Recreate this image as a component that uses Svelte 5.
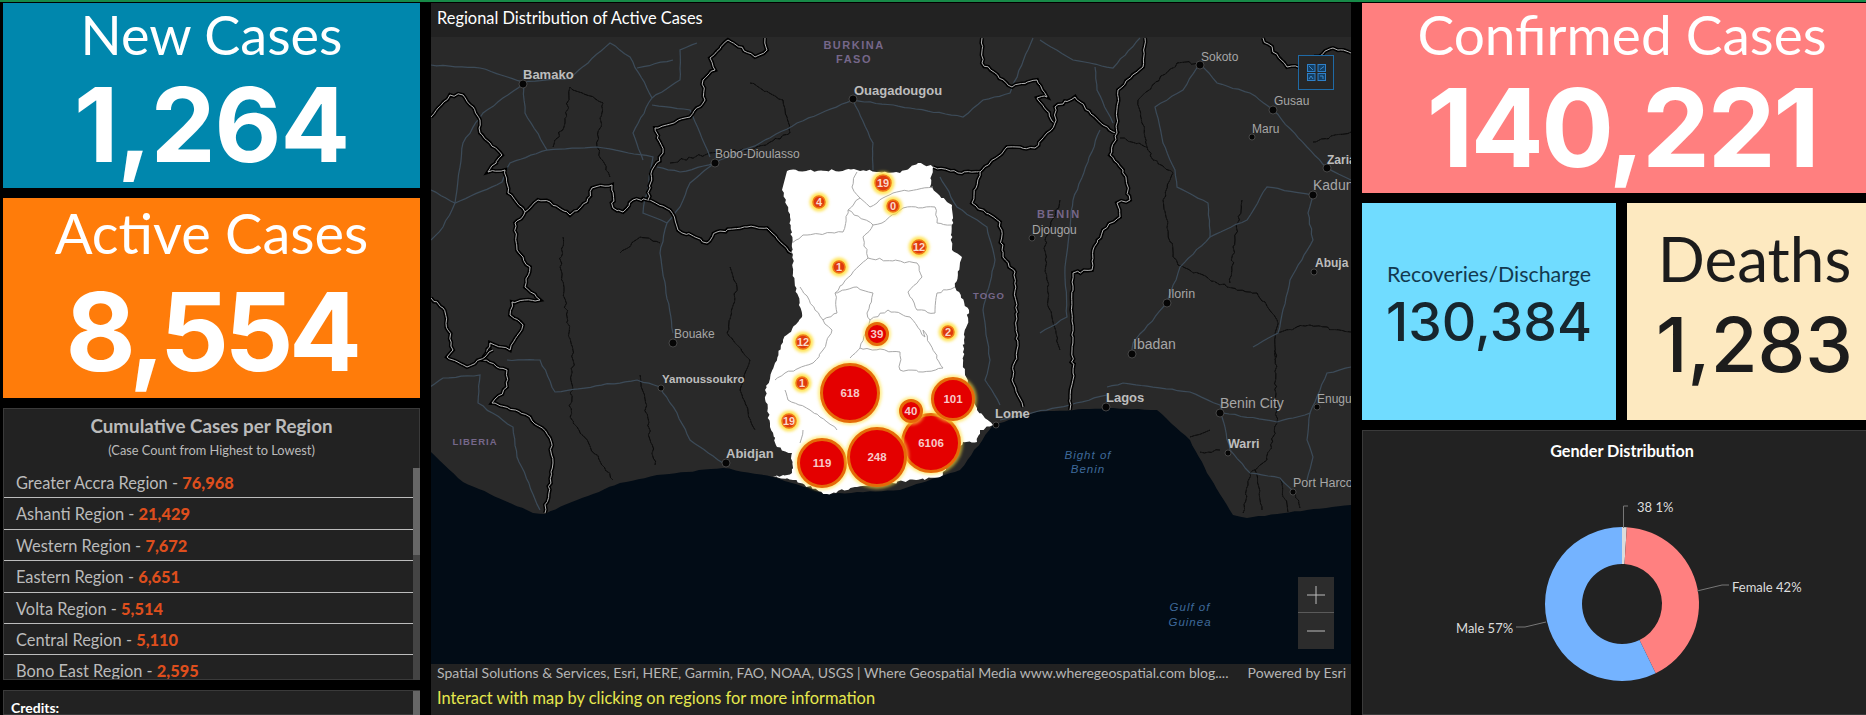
<script>
  // map data is in page pixels, the svg viewBox starts at the map's own corner
  const rivers = [
    "431,65 480,68 523,82 525,113 547,150 597,147 653,157 643,213 667,223 660,253 673,333",
    "523,82 570,78 610,43 630,57 652,98 633,133 643,160",
    "547,150 510,163 502,182 455,203 431,190",
    "455,203 443,227 431,240",
    "523,84 483,113 463,143 458,180 455,203",
    "853,100 797,123 760,143 715,163 680,172 657,167",
    "715,163 690,183 680,207 667,223",
    "652,98 680,80 680,50 697,43",
    "637,68 673,60",
    "652,105 690,110 700,133 710,157",
    "853,100 873,143 873,170",
    "853,100 910,108 963,117 983,100 1010,93 1033,38",
    "1040,40 1073,60 1113,68 1140,38",
    "1095,67 1097,90 1113,123",
    "1200,63 1183,90 1155,107 1163,143 1175,170 1177,187 1208,203 1210,237 1180,267 1167,303 1133,343 1132,353",
    "1200,63 1217,83 1250,93 1273,110 1307,147 1327,168 1351,180",
    "1210,237 1247,220 1267,187 1313,195 1308,213 1313,240 1290,280 1278,333 1253,347",
    "1100,130 1073,200 1065,267 1067,317 1040,333",
    "940,177 957,207 987,227 995,260 983,310 990,360 985,380 1000,405",
    "1107,387 1123,383 1190,392 1220,405 1223,413 1277,422 1310,413 1327,373 1351,367",
    "1222,417 1230,450 1250,473 1280,478 1292,490",
    "1310,413 1307,440 1313,457 1307,480",
    "430,387 443,378 480,375 478,403 513,427 517,457 540,510",
    "507,360 540,360 555,392 637,380 660,387 677,413 690,440 723,463",
    "1000,420 1035,412 1070,405 1107,395"
  ];
  const streams = [
    "570,87 603,103 597,147 610,177",
    "570,87 565,123 553,147",
    "730,267 737,287 727,333 750,360 740,390 755,430",
    "563,237 560,267 573,360 570,417 613,480",
    "660,243 640,237 620,253",
    "750,83 783,100 787,117 790,133 750,150 710,153 670,163",
    "1138,100 1177,63 1200,63",
    "1138,100 1147,147 1120,138",
    "1147,147 1153,160 1173,173 1163,200 1173,257 1178,265 1227,287 1257,293 1277,320 1275,360",
    "1242,200 1235,240 1230,283",
    "1277,333 1310,325 1351,332",
    "1313,142 1351,132",
    "1275,350 1277,423 1267,460 1250,473 1243,513",
    "1255,470 1262,510",
    "1280,478 1288,512",
    "1295,490 1300,508",
    "1190,437 1210,430",
    "1200,452 1220,450",
    "640,375 655,465",
    "1060,200 1045,240 1048,300 1060,350"
  ];
  const borders = [
    "431,117 438,108 450,95 463,95 473,107 480,120 480,133 490,143 502,155 488,172 505,170 508,193 525,212 538,200 550,202 570,215 587,202 592,188 612,185 613,208 623,212 633,200 648,200 670,210 678,230 707,243 717,232 747,227 767,228 792,253",
    "648,200 652,170 663,153 655,128 690,117 705,100 703,80 715,70 710,58 728,40 755,57 767,50 765,38",
    "525,212 515,223 517,250 530,267 525,287 540,300 512,302 510,315 523,325 510,350 490,343 483,360 507,370 507,387 492,403 530,417 550,438 553,463 545,513",
    "431,298 443,308 453,350 447,357 467,367 485,357 493,350",
    "982,38 982,63 1012,87 1037,80 1047,97 1037,98 1055,123 1035,148 1007,147 980,172 958,173 933,167",
    "980,172 972,203 1000,222 1003,257 1015,272 1017,350 1012,380 1023,407",
    "1055,123 1055,107 1075,97 1103,125 1117,133 1110,155 1123,170 1130,200 1117,203 1120,217 1103,230 1093,250 1092,270 1073,273 1072,350 1073,373 1070,410",
    "1117,133 1118,90 1143,67 1145,38",
    "1263,38 1287,67 1298,67 1333,48 1351,53"
  ];
  const ocean = "431,452 463,482 533,513 545,514 577,500 620,483 657,475 723,468 773,477 827,494 900,490 960,470 993,425 1037,412 1107,408 1157,410 1190,440 1207,473 1233,515 1247,518 1307,510 1351,505";
  const ghana = "787,171 857,170 900,173 918,163 933,167 930,187 952,205 952,250 962,257 955,287 969,310 964,340 963,363 965,375 977,410 993,425 980,430 977,442 963,442 940,477 857,487 827,494 793,480 773,477 792,473 792,453 777,447 770,427 765,390 775,363 783,340 802,317 793,273 792,243 790,217 782,190";
  const districts = [
    "857,172 852,187 860,198 848,210 843,232 803,235 792,243",
    "860,198 870,207 893,193 933,187",
    "848,210 873,225 863,237 868,258 917,263 922,277 908,292 917,310 935,313 937,293 955,287",
    "873,225 882,223 903,208 935,207 937,223 952,225",
    "868,258 860,265 835,293 837,313 823,320 800,287",
    "835,293 857,287 873,293 867,313 870,320 888,310 910,317 925,337",
    "870,320 860,348 900,352 900,370 923,372 943,368 923,330 925,337",
    "823,320 832,330 823,350 813,363 785,373 775,380",
    "785,390 788,400 810,410 820,417 837,430",
    "803,430 800,443",
    "860,348 850,358"
  ];

  const cities = [
    { x: 523, y: 84, name: "Bamako", lx: 523, ly: 79, bold: true, size: 13 },
    { x: 853, y: 99, name: "Ouagadougou", lx: 854, ly: 95, bold: true, size: 13 },
    { x: 715, y: 163, name: "Bobo-Dioulasso", lx: 715, ly: 158, size: 12 },
    { x: 673, y: 343, name: "Bouake", lx: 674, ly: 338, size: 12 },
    { x: 661, y: 388, name: "Yamoussoukro", lx: 662, ly: 383, bold: true, size: 11.5, r: 3 },
    { x: 726, y: 463, name: "Abidjan", lx: 726, ly: 458, bold: true, size: 13 },
    { x: 1032, y: 238, name: "Djougou", lx: 1032, ly: 234, size: 12, r: 3 },
    { x: 1200, y: 65, name: "Sokoto", lx: 1201, ly: 61, size: 12 },
    { x: 1273, y: 110, name: "Gusau", lx: 1274, ly: 105, size: 12 },
    { x: 1252, y: 137, name: "Maru", lx: 1252, ly: 133, size: 12, r: 3 },
    { x: 1327, y: 168, name: "Zaria", lx: 1327, ly: 164, bold: true, size: 12 },
    { x: 1313, y: 195, name: "Kaduna", lx: 1313, ly: 190, size: 14 },
    { x: 1314, y: 272, name: "Abuja", lx: 1315, ly: 267, bold: true, size: 12, r: 3 },
    { x: 1167, y: 303, name: "Ilorin", lx: 1168, ly: 298, size: 12.5 },
    { x: 1132, y: 354, name: "Ibadan", lx: 1133, ly: 349, size: 14 },
    { x: 1106, y: 407, name: "Lagos", lx: 1106, ly: 402, bold: true, size: 13 },
    { x: 996, y: 425, name: "Lome", lx: 995, ly: 418, bold: true, size: 13, r: 3 },
    { x: 1220, y: 413, name: "Benin City", lx: 1220, ly: 408, size: 14 },
    { x: 1317, y: 407, name: "Enugu", lx: 1317, ly: 403, size: 12, r: 3 },
    { x: 1228, y: 453, name: "Warri", lx: 1228, ly: 448, bold: true, size: 12.5, r: 3 },
    { x: 1293, y: 492, name: "Port Harcourt", lx: 1293, ly: 487, size: 12.5, r: 3 }
  ];
  const countries = [
    { x: 854, y: 49, name: "BURKINA", size: 11, sp: 1.5 },
    { x: 854, y: 63, name: "FASO", size: 11, sp: 1.5 },
    { x: 1059, y: 218, name: "BENIN", size: 11, sp: 2 },
    { x: 989, y: 299, name: "TOGO", size: 9.5, sp: 1 },
    { x: 475, y: 445, name: "LIBERIA", size: 9.5, sp: 1 }
  ];
  const seas = [
    { x: 1088, y: 459, name: "Bight of" },
    { x: 1088, y: 473, name: "Benin" },
    { x: 1190, y: 611, name: "Gulf of" },
    { x: 1190, y: 626, name: "Guinea" }
  ];
  const clusters = [
    { x: 819, y: 202, r: 6, n: 4 },
    { x: 883, y: 183, r: 8, n: 19 },
    { x: 893, y: 206, r: 6, n: 0 },
    { x: 919, y: 247, r: 7, n: 12 },
    { x: 839, y: 267, r: 6, n: 1 },
    { x: 877, y: 334, r: 12, n: 39 },
    { x: 948, y: 332, r: 6, n: 2 },
    { x: 803, y: 342, r: 7, n: 12 },
    { x: 802, y: 383, r: 6, n: 1 },
    { x: 789, y: 421, r: 7, n: 19 },
    { x: 850, y: 393, r: 30, n: 618 },
    { x: 931, y: 443, r: 30, n: 6106 },
    { x: 911, y: 411, r: 12, n: 40 },
    { x: 953, y: 399, r: 22, n: 101 },
    { x: 822, y: 463, r: 25, n: 119 },
    { x: 877, y: 457, r: 30, n: 248 }
  ];
  const regions = [
    ["Greater Accra Region", "76,968"],
    ["Ashanti Region", "21,429"],
    ["Western Region", "7,672"],
    ["Eastern Region", "6,651"],
    ["Volta Region", "5,514"],
    ["Central Region", "5,110"],
    ["Bono East Region", "2,595"]
  ];

  // small seeded random so the borders come out the same on every run
  let seed = 7;
  function rnd() {
    seed = (seed * 16807) % 2147483647;
    return seed / 2147483647 - 0.5;
  }

  function rough(line, amp = 1.2, step = 6, close = false) {
    const pts = line.split(" ").map((p) => p.split(",").map(Number));
    let d = `M${pts[0][0]} ${pts[0][1]}`;
    for (let i = 1; i < pts.length; i++) {
      const [ax, ay] = pts[i - 1];
      const [bx, by] = pts[i];
      const steps = Math.max(1, Math.round(Math.hypot(bx - ax, by - ay) / step));
      for (let s = 1; s <= steps; s++) {
        const t = s / steps;
        const j = s === steps ? 0 : amp;
        d += `L${(ax + (bx - ax) * t + rnd() * j).toFixed(1)} ${(ay + (by - ay) * t + rnd() * j).toFixed(1)}`;
      }
    }
    return close ? d + "Z" : d;
  }

  function arc(from, to, R = 77, r = 40) {
    const a = (from / 100) * 2 * Math.PI;
    const b = (to / 100) * 2 * Math.PI;
    const p = (rad, ang) => `${(rad * Math.sin(ang)).toFixed(2)} ${(-rad * Math.cos(ang)).toFixed(2)}`;
    const large = to - from > 50 ? 1 : 0;
    return `M${p(R, a)}A${R} ${R} 0 ${large} 1 ${p(R, b)}L${p(r, b)}A${r} ${r} 0 ${large} 0 ${p(r, a)}Z`;
  }

  const riverPaths = rivers.map((l) => rough(l, 1.2));
  const streamPaths = streams.map((l) => rough(l, 3, 4));
  const borderPaths = borders.map((l) => rough(l, 2.6, 4));
  const districtPaths = districts.map((l) => rough(l, 2.2, 4));
  const oceanPath = rough(ocean, 1) + "L1351 664L431 664Z";
  const ghanaPath = rough(ghana, 2.6, 3, true);
</script>

<div class="page">
  <div class="col">
    <section class="card blue">
      <div class="label new-label">New Cases</div>
      <div class="num new-num">1,264</div>
    </section>
    <section class="card orange">
      <div class="label active-label">Active Cases</div>
      <div class="num active-num">8,554</div>
    </section>
    <section class="panel list">
      <h3>Cumulative Cases per Region</h3>
      <p class="sub">(Case Count from Highest to Lowest)</p>
      <div class="rows">
        {#each regions as [name, count]}
          <div class="row">{name} - <b>{count}</b></div>
        {/each}
      </div>
      <div class="scroll"><div class="thumb"></div></div>
    </section>
    <section class="panel credits">
      <u>Credits:</u>
      <div class="scroll top"><div class="thumb full"></div></div>
    </section>
  </div>

  <div class="center">
    <header class="map-title">Regional Distribution of Active Cases</header>
    <div class="map">
      <svg viewBox="431 37 920 627" width="920" height="627">
        <defs>
          <filter id="glow" x="-60%" y="-60%" width="220%" height="220%">
            <feGaussianBlur stdDeviation="1.6" />
          </filter>
          <filter id="soft" x="-5%" y="-5%" width="110%" height="110%">
            <feGaussianBlur stdDeviation="0.3" />
          </filter>
        </defs>
        <rect x="431" y="37" width="920" height="627" fill="#292929" />
        <path d={oceanPath} fill="#020c16" />
        <g fill="none" filter="url(#soft)">
          {#each streamPaths as d}
            <path {d} stroke="#0a0a0a" stroke-width="0.9" />
          {/each}
          {#each riverPaths as d}
            <path {d} stroke="#3c4b59" stroke-width="1.2" />
          {/each}
          {#each borderPaths as d}
            <path {d} stroke="#020202" stroke-width="4" />
            <path {d} stroke="#b5b5b5" stroke-width="1" />
          {/each}
        </g>
        <path d={ghanaPath} fill="#fff" filter="url(#soft)" />
        <g fill="none" stroke="#a9a9a9" stroke-width="1">
          {#each districtPaths as d}
            <path {d} />
          {/each}
        </g>
        {#each cities as c}
          <circle cx={c.x} cy={c.y} r={c.r ?? 4} fill="#050505" stroke="#5c5c5c" stroke-width="0.7" />
          <text x={c.lx} y={c.ly} class="city" class:strong={c.bold} font-size={c.size}>{c.name}</text>
        {/each}
        {#each countries as c}
          <text x={c.x} y={c.y} class="country" font-size={c.size} letter-spacing={c.sp}>{c.name}</text>
        {/each}
        {#each seas as s}
          <text x={s.x} y={s.y} class="sea">{s.name}</text>
        {/each}
        {#each clusters as c}
          <circle cx={c.x} cy={c.y} r={c.r + (c.r < 10 ? 3.5 : 2)} fill="#ffdf3c" fill-opacity={c.r < 10 ? 0.85 : 0.6} filter="url(#glow)" />
          {#if c.r < 10}
            <circle cx={c.x} cy={c.y} r={c.r} fill="#de3a0e" stroke="#f07a16" stroke-width="1.5" />
          {:else}
            <circle cx={c.x} cy={c.y} r={c.r - 1.5} fill="#e40000" stroke="#e56a08" stroke-width="3" />
          {/if}
          <text x={c.x} y={c.y + 4} class="count" class:tiny={c.r < 10}>{c.n}</text>
        {/each}
      </svg>
      <button class="widget basemap" aria-label="Basemap gallery">
        <svg viewBox="0 0 19 17" width="19" height="17">
          <g fill="#123f66" stroke="#2f80c8" stroke-width="1">
            <rect x="0.5" y="0.5" width="7.5" height="7" />
            <rect x="11" y="0.5" width="7.5" height="7" />
            <rect x="0.5" y="9.5" width="7.5" height="7" />
            <rect x="11" y="9.5" width="7.5" height="7" />
          </g>
          <path d="M2 2l4 4M13 5.5l4-3M2 15l2-3 2 3M13 12h3v3" fill="none" stroke="#4a9ade" stroke-width="0.8" />
        </svg>
      </button>
      <div class="widget zoom">
        <button aria-label="Zoom in"><svg viewBox="0 0 18 18" width="18" height="18"><path d="M9 0v18M0 9h18" stroke="#bbb" fill="none" /></svg></button>
        <button aria-label="Zoom out"><svg viewBox="0 0 18 18" width="18" height="18"><path d="M0 9h18" stroke="#bbb" fill="none" /></svg></button>
      </div>
    </div>
    <div class="attribution">
      <span class="attr-text">Spatial Solutions &amp; Services, Esri, HERE, Garmin, FAO, NOAA, USGS | Where Geospatial Media www.wheregeospatial.com blog....</span>
      <span class="powered">Powered by Esri</span>
    </div>
    <div class="hint">Interact with map by clicking on regions for more information</div>
  </div>

  <div class="col right">
    <section class="card pink">
      <div class="label confirmed-label">Confirmed Cases</div>
      <div class="num confirmed-num">140,221</div>
    </section>
    <div class="pair">
      <section class="card sky">
        <div class="rec-label">Recoveries/Discharge</div>
        <div class="rec-num">130,384</div>
      </section>
      <section class="card cream">
        <div class="death-label">Deaths</div>
        <div class="death-num">1,283</div>
      </section>
    </div>
    <section class="panel gender">
      <h4>Gender Distribution</h4>
      <svg class="donut" viewBox="1362 430 520 285" width="520" height="285">
        <g transform="translate(1622 604)">
          <path d={arc(0, 1)} fill="#dcdcdc" />
          <path d={arc(1, 42.8)} fill="#ff8080" />
          <path d={arc(42.8, 100)} fill="#74b3ff" />
        </g>
        <g fill="none" stroke="#777">
          <path d="M1623.5 528V506H1628" />
          <path d="M1697 591L1722 585H1729" />
          <path d="M1546 622L1525 627H1516" />
        </g>
        <text x="1637" y="512" class="slice">38 1%</text>
        <text x="1732" y="592" class="slice">Female 42%</text>
        <text x="1456" y="633" class="slice">Male 57%</text>
      </svg>
      <h4 class="next">Age Groups Most Affected</h4>
    </section>
  </div>
</div>

<style>
  :global(body) {
    margin: 0;
    background: #000;
  }

  button {
    padding: 0;
    border: 0;
    background: none;
    display: flex;
    align-items: center;
    justify-content: center;
  }

  /* the right column runs past the window's edge, as the dashboard does */
  .page {
    display: grid;
    grid-template-columns: 417px 920px 520px;
    column-gap: 11px;
    box-sizing: border-box;
    width: 1866px;
    height: 715px;
    padding: 1px 0 0 3px;
    border-top: 2px solid #178a48;
    background: #000;
    overflow: hidden;
    font-family: Lato, "Open Sans", sans-serif;
  }

  .col {
    display: flex;
    flex-direction: column;
    gap: 10px;
    min-height: 0;
  }

  .card {
    text-align: center;
    color: #fff;
    overflow: hidden;
    flex: none;
  }

  .blue {
    height: 185px;
    background: #0087ad;
  }

  .orange {
    height: 200px;
    background: #ff7c0a;
  }

  .pink {
    height: 190px;
    background: #ff7f7f;
  }

  .label,
  .num {
    white-space: nowrap;
  }

  .label {
    font-weight: 400;
    line-height: 1;
  }

  .num {
    font-family: Inter, "Liberation Sans", sans-serif;
    font-weight: 700;
    line-height: 1;
  }

  .new-label {
    font-size: 54px;
    padding-top: 5px;
  }

  .new-num {
    font-size: 103px;
    letter-spacing: -1px;
    margin-top: 11px;
  }

  .active-label {
    font-size: 56px;
    padding-top: 7px;
  }

  .active-num {
    font-size: 108px;
    letter-spacing: -4.5px;
    margin-top: 17px;
  }

  .confirmed-label {
    font-size: 55px;
    padding-top: 4px;
  }

  .confirmed-num {
    font-size: 108px;
    letter-spacing: -2.5px;
    margin-top: 12px;
  }

  .panel {
    position: relative;
    box-sizing: border-box;
    background: #222;
    outline: 1px solid #3a3a3a;
    outline-offset: -1px;
    overflow: hidden;
  }

  .list {
    height: 272px;
    flex: none;
    color: #bbb;
  }

  .list h3 {
    margin: 7px 0 0;
    font-size: 18.8px;
    line-height: 22px;
    font-weight: 700;
    text-align: center;
  }

  .sub {
    margin: 5px 0 0;
    font-size: 12.8px;
    line-height: 16px;
    text-align: center;
  }

  .rows {
    margin: 9px 7px 0 1px;
  }

  .row {
    box-sizing: border-box;
    height: 31.4px;
    padding: 5px 0 0 12px;
    font-size: 16.4px;
    line-height: 22px;
    border-bottom: 1px solid #bdbdbd;
    white-space: nowrap;
  }

  .row b {
    color: #dd4e1d;
    font-weight: 900;
  }

  /* the scrollbar sits over the panel's content */
  .scroll {
    position: absolute;
    right: 0;
    top: 60px;
    bottom: 0;
    width: 7px;
    background: #444;
  }

  .scroll.top {
    top: 1px;
  }

  .thumb {
    height: 87px;
    background: #666;
  }

  .thumb.full {
    height: 100%;
  }

  .credits {
    flex: 1;
    padding: 9px 8px;
    font-size: 14px;
    font-weight: 700;
    color: #fff;
  }

  .center {
    display: flex;
    flex-direction: column;
    background: #222;
    min-height: 0;
  }

  .map-title {
    height: 34px;
    padding-left: 6px;
    font-size: 16.4px;
    line-height: 29px;
    color: #fff;
    flex: none;
  }

  .map {
    position: relative;
    height: 627px;
    flex: none;
    overflow: hidden;
  }

  .map > svg {
    display: block;
  }

  .city {
    font-family: "Liberation Sans", Arial, sans-serif;
    fill: #a6a6a6;
  }

  .city.strong {
    font-weight: 700;
    fill: #bdbdbd;
  }

  .country {
    font-family: "Liberation Sans", Arial, sans-serif;
    font-weight: 700;
    text-anchor: middle;
    fill: #76678a;
  }

  .sea {
    font-family: "Liberation Sans", Arial, sans-serif;
    font-size: 11.5px;
    font-style: italic;
    letter-spacing: 1px;
    text-anchor: middle;
    fill: #3f6a9a;
  }

  .count {
    font-family: "Liberation Sans", Arial, sans-serif;
    font-size: 11.5px;
    font-weight: 700;
    text-anchor: middle;
    fill: #f7c9c9;
  }

  .count.tiny {
    font-size: 11px;
    fill: #fbd9c9;
  }

  .widget {
    position: absolute;
    right: 17px;
    width: 36px;
  }

  .basemap {
    top: 18px;
    height: 35px;
    box-sizing: border-box;
    border: 1px solid #1f6aa6;
    background: #262626;
  }

  .zoom {
    top: 540px;
    display: flex;
    flex-direction: column;
    background: #2c2c2c;
  }

  .zoom button {
    height: 36px;
  }

  .zoom button:first-child {
    border-bottom: 1px solid #5a5a5a;
  }

  .attribution {
    display: flex;
    height: 17px;
    flex: none;
    padding: 0 5px 0 6px;
    font-size: 14px;
    line-height: 17px;
    color: #b5b5b5;
    white-space: nowrap;
  }

  .attr-text {
    width: 810px;
    overflow: hidden;
  }

  .powered {
    margin-left: auto;
  }

  .hint {
    padding: 7px 0 0 6px;
    font-size: 16.4px;
    line-height: 20px;
    color: #e6e84e;
  }

  .pair {
    display: flex;
    gap: 11px;
    flex: none;
  }

  .sky {
    width: 254px;
    height: 217px;
    background: #70dcff;
    color: #17262e;
  }

  .cream {
    width: 255px;
    height: 217px;
    background: #fde9c0;
    color: #1c1c1c;
  }

  .rec-label {
    margin-top: 59px;
    font-size: 21.4px;
    line-height: 24px;
    color: #123a50;
  }

  .rec-num {
    margin-top: 8px;
    font-family: Inter, "Liberation Sans", sans-serif;
    font-size: 53.5px;
    line-height: 56px;
    font-weight: 500;
  }

  .death-label {
    margin-top: 25px;
    font-size: 62px;
    line-height: 60px;
  }

  .death-num {
    margin-top: 18px;
    font-family: Inter, "Liberation Sans", sans-serif;
    font-size: 76px;
    line-height: 76px;
    font-weight: 500;
  }

  .gender {
    flex: 1;
    min-height: 0;
    color: #fff;
  }

  .gender h4 {
    position: relative;
    margin: 13px 0 0;
    font-size: 16.2px;
    line-height: 16px;
    font-weight: 700;
    text-align: center;
  }

  .donut {
    position: absolute;
    left: 0;
    top: 0;
  }

  .gender h4.next {
    margin-top: 253px;
    font-size: 14px;
    color: #bbb;
  }

  .slice {
    font-family: Lato, sans-serif;
    font-size: 13px;
    fill: #ddd;
  }
</style>
